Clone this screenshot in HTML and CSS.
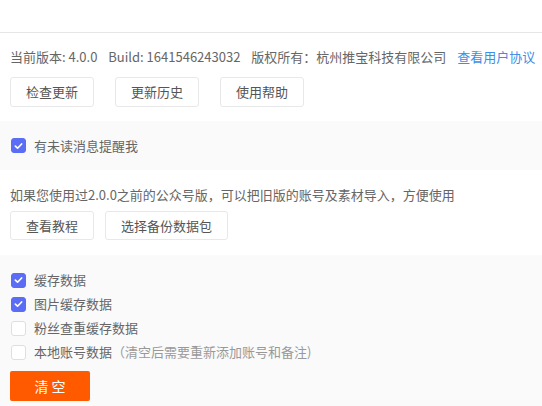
FILE: index.html
```html
<!DOCTYPE html>
<html lang="zh-CN">
<head>
<meta charset="utf-8">
<link rel="stylesheet" href="styles.css">
</head>
<body>
<div class="page">
  <div class="header"></div>

  <section class="sec sec-about">
    <div class="info">
      <span class="seg">当前版本: 4.0.0</span>
      <span class="seg">Build: 1641546243032</span>
      <span class="seg">版权所有：杭州推宝科技有限公司</span>
      <a class="link">查看用户协议</a>
    </div>
    <div class="btns btns-wide">
      <button class="btn">检查更新</button>
      <button class="btn">更新历史</button>
      <button class="btn">使用帮助</button>
    </div>
  </section>

  <section class="sec sec-gray sec-notify">
    <label class="check-row">
      <span class="cb on"><svg viewBox="0 0 14 14" width="14" height="14"><path d="M3.6 7.2 L6 9.4 L10.4 4.8" fill="none" stroke="#fff" stroke-width="1.8" stroke-linecap="round" stroke-linejoin="round"/></svg></span>
      <span class="lbl">有未读消息提醒我</span>
    </label>
  </section>

  <section class="sec sec-import">
    <div class="info">如果您使用过2.0.0之前的公众号版，可以把旧版的账号及素材导入，方便使用</div>
    <div class="btns btns-tight">
      <button class="btn btn-s">查看教程</button>
      <button class="btn btn-s">选择备份数据包</button>
    </div>
  </section>

  <section class="sec sec-gray sec-clear">
    <label class="check-row">
      <span class="cb on"><svg viewBox="0 0 14 14" width="14" height="14"><path d="M3.6 7.2 L6 9.4 L10.4 4.8" fill="none" stroke="#fff" stroke-width="1.8" stroke-linecap="round" stroke-linejoin="round"/></svg></span>
      <span class="lbl">缓存数据</span>
    </label>
    <label class="check-row">
      <span class="cb on"><svg viewBox="0 0 14 14" width="14" height="14"><path d="M3.6 7.2 L6 9.4 L10.4 4.8" fill="none" stroke="#fff" stroke-width="1.8" stroke-linecap="round" stroke-linejoin="round"/></svg></span>
      <span class="lbl">图片缓存数据</span>
    </label>
    <label class="check-row">
      <span class="cb"></span>
      <span class="lbl">粉丝查重缓存数据</span>
    </label>
    <label class="check-row">
      <span class="cb"></span>
      <span class="lbl">本地账号数据<span class="note">（清空后需要重新添加账号和备注)</span></span>
    </label>
    <button class="btn-clear">清 空</button>
  </section>
</div>
</body>
</html>
```

FILE: styles.css
```css
* { box-sizing: border-box; }
html, body {
  margin: 0;
  padding: 0;
  background: #fafafa;
}
body {
  font-family: "Noto Sans CJK SC", "Noto Sans", sans-serif;
  font-size: 13px;
  color: #666;
}
.page {
  width: 542px;
  height: 406px;
  overflow: hidden;
  display: flex;
  flex-direction: column;
}
.header {
  height: 33px;
  background: #fff;
  border-bottom: 1px solid #e6e6e6;
  flex: none;
}
.sec {
  background: #fff;
  padding: 0 10px;
  flex: none;
}
.sec-gray { background: #fafafa; }
.sec-about {
  height: 88px;
  padding-top: 14px;
}
.info {
  line-height: 20px;
  white-space: nowrap;
  color: #666;
}
.seg { margin-right: 8px; }
.link { color: #3d8ee6; cursor: pointer; }
.btns {
  display: flex;
}
.btns-wide { margin-top: 10px; gap: 21px; }
.btns-tight { margin-top: 6px; gap: 11px; }
.btn {
  font-family: inherit;
  font-size: 13px;
  color: #555;
  background: #fff;
  border: 1px solid #e8e8e8;
  border-radius: 3px;
  height: 30px;
  padding: 0 15px;
  line-height: 28px;
}
.btn-s { height: 29px; line-height: 27px; }
.sec-notify {
  height: 49px;
  display: flex;
  align-items: center;
}
.check-row {
  display: flex;
  align-items: center;
  gap: 8px;
  height: 24px;
}
.cb {
  width: 15px;
  height: 15px;
  border-radius: 3px;
  border: 1px solid #dcdfe6;
  background: #fff;
  display: flex;
  align-items: center;
  justify-content: center;
  margin-left: 1px;
}
.cb.on {
  background: #5b6cf5;
  border-color: #5b6cf5;
}
.cb svg { display: block; }
.lbl { color: #666; line-height: 20px; }
.note { color: #999; }
.sec-import {
  height: 85px;
  padding-top: 15px;
}
.sec-clear {
  flex: 1;
  padding-top: 13px;
  display: flex;
  flex-direction: column;
  align-items: flex-start;
}
.btn-clear {
  margin-top: 7px;
  width: 80px;
  height: 30px;
  background: #ff5a00;
  border: none;
  border-radius: 2px;
  color: #fff;
  font-family: inherit;
  font-size: 14px;
}
```
